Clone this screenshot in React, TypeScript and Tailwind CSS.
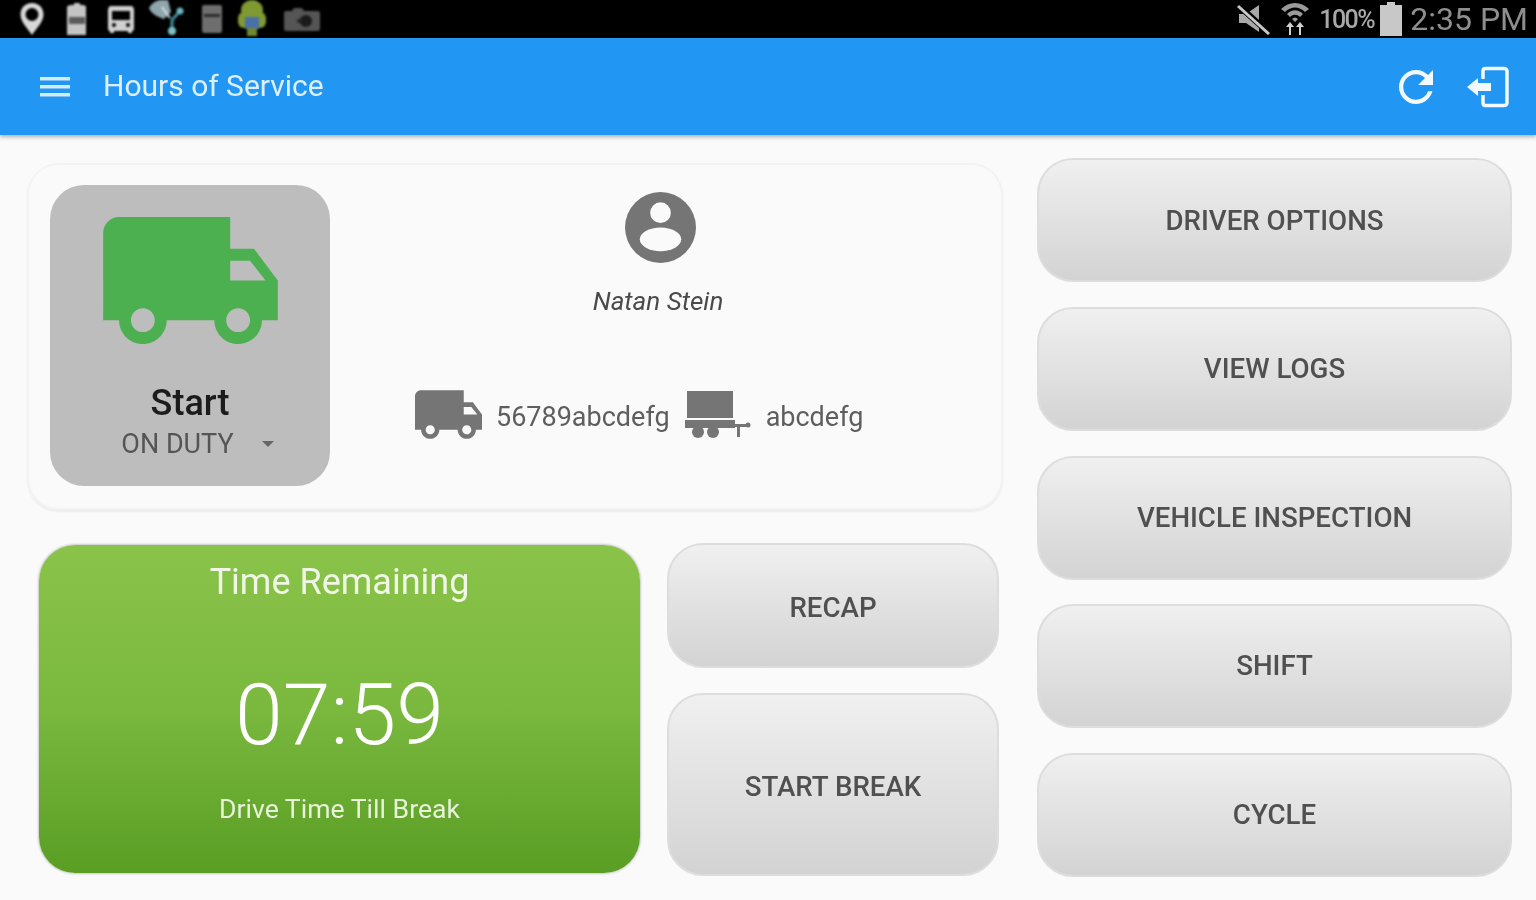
const truckPath =
  "M20 8h-3V4H3c-1.1 0-2 .9-2 2v11h2c0 1.66 1.34 3 3 3s3-1.34 3-3h6c0 1.66 1.34 3 3 3s3-1.34 3-3h2v-5l-3-4zM6 18.5c-.83 0-1.5-.67-1.5-1.5s.67-1.5 1.5-1.5 1.5.67 1.5 1.5-.67 1.5-1.5 1.5zm13.5-9l1.96 2.5H17V9.5h2.5zm-1.5 9c-.83 0-1.5-.67-1.5-1.5s.67-1.5 1.5-1.5 1.5.67 1.5 1.5-.67 1.5-1.5 1.5z";

function StatusLeft() {
  return (
    <div className="flex items-center pl-[19px] blur-[0.8px]">
      {/* pin */}
      <svg viewBox="0 0 26 34" className="h-[34px] w-[26px]">
        <path d="M13 1C6 1 1.500 6 1.500 12.500 1.500 20 9 27 13 33c4-6 11.500-13 11.500-20.500C24.500 6 20 1 13 1z" fill="#d8d8d8" />
        <circle cx="13" cy="12.500" r="6.500" fill="#000" />
      </svg>
      {/* sd card */}
      <svg viewBox="0 0 26 34" className="ml-[19px] h-[34px] w-[26px]">
        <path d="M7 3h3V1h6v2h3c2 0 3 1 3 2v28H3V5c0-1 2-2 4-2z" fill="#c4c4c4" />
        <rect x="5" y="15" width="16" height="7" fill="#5a5a5a" />
      </svg>
      {/* bus */}
      <svg viewBox="0 0 28 30" className="ml-[17px] h-[30px] w-[28px]">
        <path d="M4 2h20c2 0 3 2 3 4v19c0 1-1 2-2 2v2h-4v-2H7v2H3v-2c-1 0-2-1-2-2V6c0-2 1-4 3-4z" fill="#d0d0d0" />
        <rect x="5" y="7" width="18" height="9" fill="#000" />
        <circle cx="7" cy="21" r="2" fill="#000" />
        <circle cx="21" cy="21" r="2" fill="#000" />
      </svg>
      {/* share / wrench */}
      <svg viewBox="0 0 38 38" className="ml-[13px] h-[38px] w-[38px]">
        <path d="M1 8 C4 2 12 -2 20 0 L23 12 L16 19 C10 17 3 14 1 8z" fill="#8fa5ad" />
        <path d="M14 7 L22 18" stroke="#d8e4e8" strokeWidth="2" />
        <path d="M32 11 L24 20 L24 30" stroke="#3d8f9c" strokeWidth="3" fill="none" />
        <circle cx="32" cy="11" r="3.500" fill="#6cb4c0" />
        <circle cx="24" cy="31" r="4" fill="#7fc0c8" />
      </svg>
      {/* small card */}
      <svg viewBox="0 0 20 28" className="ml-[16px] h-[28px] w-[20px]">
        <rect x="0" y="0" width="20" height="28" rx="2" fill="#6e6e6e" />
        <rect x="2" y="9" width="16" height="3" fill="#2c2c2c" />
      </svg>
      {/* android */}
      <svg viewBox="0 0 30 38" className="ml-[15px] h-[38px] w-[30px]">
        <ellipse cx="15" cy="10" rx="11" ry="10" fill="#7f9a32" />
        <rect x="1" y="12" width="28" height="16" rx="6" fill="#7f9a32" />
        <rect x="8" y="17" width="14" height="12" fill="#4a70a8" />
        <rect x="10" y="28" width="10" height="8" fill="#6e8a2c" />
      </svg>
      {/* camera */}
      <svg viewBox="0 0 36 24" className="ml-[17px] h-[24px] w-[36px]">
        <path d="M2 4h6l2-3h8l2 3h14c1 0 2 1 2 2v16c0 1-1 2-2 2H2c-1 0-2-1-2-2V6c0-1 1-2 2-2z" fill="#555" />
        <circle cx="22" cy="14" r="6" fill="#1a1a1a" />
        <path d="M12 14l6-4v8z" fill="#222" />
      </svg>
    </div>
  );
}

function StatusRight() {
  return (
    <div className="flex items-center pr-[8px] blur-[0.7px]">
      <svg viewBox="0 0 34 32" className="h-[32px] w-[34px]">
        <path d="M2 11h7l13-9v27L9 20H2z" fill="#a8a8a8" />
        <path d="M2 3l30 27" stroke="#000" strokeWidth="6" />
        <path d="M1 3l31 28" stroke="#c8c8c8" strokeWidth="3" />
      </svg>
      <svg viewBox="0 0 30 34" className="ml-[9px] h-[34px] w-[30px]">
        <path d="M1 7C9 -1 21 -1 29 7L25 10C19 4 11 4 5 10zM7 12c5-5 11-5 16 0l-3 3c-3-3-7-3-10 0zM12 17c2-2 4-2 6 0l-3 3z" fill="#9a9a9a" />
        <path d="M9 33v-8l-3 0 4-5 4 5-3 0v8zM19 33v-8h-3l4-5 4 5h-3v8z" fill="#d0d0d0" />
      </svg>
      <span className="ml-[9px] text-[25px] leading-none font-medium tracking-[-1.5px] text-[#a8a8a8]">100%</span>
      <svg viewBox="0 0 22 34" className="ml-[6px] h-[34px] w-[22px]">
        <path d="M7 0h8v3h7v31H0V3h7z" fill="#c8c8c8" />
      </svg>
      <span className="ml-[8px] text-[32px] leading-none font-normal text-[#8e8e8e]">2:35 PM</span>
    </div>
  );
}

function GrayButton({ label, className }: { label: string; className: string }) {
  return (
    <button className={`flex items-center justify-center rounded-[36px] border-2 border-[#dddddd] bg-gradient-to-b from-[#f0f0f0] to-[#d3d3d3] text-[27.7px] font-medium text-[#505050] ${className}`}>
      {label}
    </button>
  );
}

export default function App() {
  return (
    <div className="flex h-[900px] w-[1536px] flex-col overflow-hidden bg-[#fafafa] font-['Roboto',sans-serif]">
      <div className="flex h-[38px] shrink-0 items-center justify-between bg-black">
        <StatusLeft />
        <StatusRight />
      </div>

      <header className="z-10 flex h-[97px] shrink-0 items-center justify-between bg-[#2196f3] shadow-[0_2px_4px_rgba(0,0,0,0.3)]">
        <div className="flex items-center blur-[0.5px]">
          <svg viewBox="0 0 30 20" className="ml-[40px] h-[20px] w-[30px]" fill="#d6ebff">
            <rect x="0" y="0" width="30" height="3.500" />
            <rect x="0" y="8" width="30" height="3.500" />
            <rect x="0" y="16" width="30" height="3.500" />
          </svg>
          <span className="ml-[33px] -translate-y-px text-[30px] text-[#dcefff]">Hours of Service</span>
        </div>
        <div className="flex items-center pr-[26px] blur-[0.5px]">
          <svg viewBox="4 4 16 16" className="h-[34px] w-[34px]" fill="#f2f9ff">
            <path d="M17.650 6.350C16.200 4.900 14.210 4 12 4c-4.420 0-7.990 3.580-7.990 8s3.570 8 7.990 8c3.730 0 6.840-2.550 7.730-6h-2.080c-.82 2.330-3.040 4-5.650 4-3.310 0-6-2.690-6-6s2.690-6 6-6c1.660 0 3.140.69 4.220 1.780L13 11h7V4l-2.350 2.350z" />
          </svg>
          <svg viewBox="0 0 44 42" className="ml-[33px] h-[42px] w-[44px]" fill="none">
            <path d="M17 13V5c0-1.500 1-2.500 2.500-2.500H38c1.500 0 3 1 3 2.500v32c0 1.500-1.500 2.500-3 2.500H19.500c-1.500 0-2.500-1-2.500-2.500v-8" stroke="#f2f9ff" strokeWidth="3.500" />
            <path d="M1 21l11-9v5h13v8H12v5z" fill="#f2f9ff" />
          </svg>
        </div>
      </header>

      <main className="flex flex-1 pt-[23px] pl-[27px] pr-[24px] blur-[0.5px]">
        <div className="flex w-[976px] shrink-0 flex-col">
          <section className="mt-[5px] flex h-[347px] rounded-[32px] border-2 border-[#f3f3f3] bg-[#fafafa] pt-[20px] pl-[21px] shadow-[0_2px_2px_rgba(0,0,0,0.06)]">
            <div className="flex h-[301px] w-[280px] flex-col items-center rounded-[34px] bg-[#bdbdbd] pt-[32px]">
              <svg viewBox="1 4 22 16" className="h-[127px] w-[175px]" fill="#4caf50">
                <path d={truckPath} />
              </svg>
              <span className="mt-[37px] text-[36px] leading-[44px] font-medium text-[#1c1c1c]">Start</span>
              <div className="mt-[1px] flex items-center pl-[15px] text-[27px] leading-[36px] text-[#555555]">
                <span>ON DUTY</span>
                <span className="ml-[28px] h-0 w-0 border-x-[6px] border-t-[6px] border-x-transparent border-t-[#666666]" />
              </div>
            </div>

            <div className="ml-[85px] flex flex-col">
              <div className="flex w-[488px] flex-col items-center pl-[2px]">
                <svg viewBox="0 0 72 72" className="mt-[7px] h-[71px] w-[71px]">
                  <circle cx="36" cy="36" r="36" fill="#757575" />
                  <circle cx="36" cy="21" r="10.500" fill="#fafafa" />
                  <ellipse cx="36" cy="48" rx="21" ry="12" fill="#fafafa" />
                </svg>
                <span className="mt-[22px] mr-[4px] text-[26px] leading-[32px] text-[#4a4a4a] italic">Natan Stein</span>
              </div>
              <div className="mt-[73px] flex items-center text-[27px] leading-none text-[#5e5e5e]">
                <svg viewBox="1 4 22 16" className="h-[49px] w-[67px]" fill="#757575">
                  <path d={truckPath} />
                </svg>
                <span className="ml-[14px] pt-[5px]">56789abcdefg</span>
                <svg viewBox="0 0 66 48" className="ml-[15px] h-[48px] w-[66px]" fill="#757575">
                  <rect x="2" y="0" width="46" height="27" />
                  <rect x="0" y="29" width="50" height="8" />
                  <circle cx="13" cy="41" r="6" />
                  <circle cx="28" cy="41" r="6" />
                  <rect x="48" y="33" width="16" height="3" />
                  <rect x="52" y="35" width="3" height="11" />
                  <circle cx="63" cy="34" r="2.500" />
                </svg>
                <span className="ml-[15px] pt-[5px]">abcdefg</span>
              </div>
            </div>
          </section>

          <div className="mt-[33px] flex">
            <div className="mt-[2px] ml-[12px] flex h-[328px] w-[601px] flex-col items-center rounded-[36px] bg-gradient-to-b from-[#8bc34a] via-[#7ab83e] to-[#5a9e24] shadow-[0_0_3px_rgba(0,0,0,0.4)]">
              <span className="mt-[15px] text-[36px] leading-[44px] font-normal text-[#f0f7e6]">Time Remaining</span>
              <span className="mt-[62px] text-[86px] leading-[98px] font-light text-white">07:59</span>
              <span className="mt-[27px] text-[26.6px] leading-[36px] text-[#e8f3da]">Drive Time Till Break</span>
            </div>
            <div className="ml-[27px] flex flex-col">
              <GrayButton label="RECAP" className="h-[125px] w-[332px] pt-[5px]" />
              <GrayButton label="START BREAK" className="mt-[25px] h-[183px] w-[332px] pt-[5px]" />
            </div>
          </div>
        </div>

        <div className="ml-[34px] flex w-[475px] shrink-0 flex-col gap-[24.75px]">
          <GrayButton label="DRIVER OPTIONS" className="h-[124px] w-full pt-[2px]" />
          <GrayButton label="VIEW LOGS" className="h-[124px] w-full" />
          <GrayButton label="VEHICLE INSPECTION" className="h-[124px] w-full" />
          <GrayButton label="SHIFT" className="h-[124px] w-full" />
          <GrayButton label="CYCLE" className="h-[124px] w-full" />
        </div>
      </main>
    </div>
  );
}
